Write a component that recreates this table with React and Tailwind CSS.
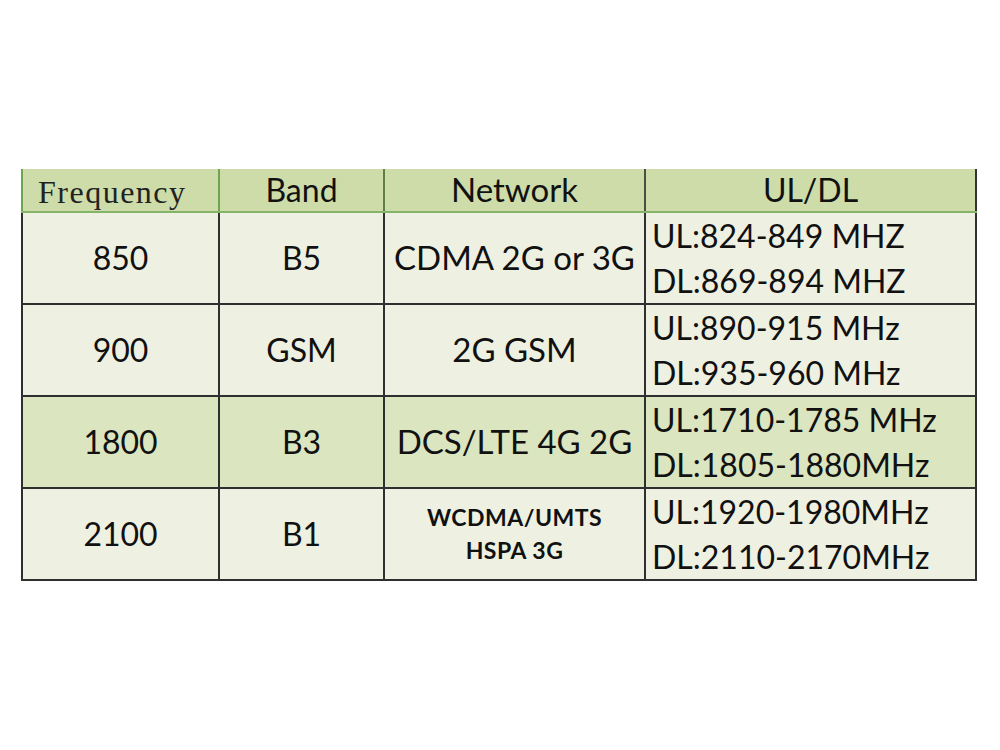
export default function App() {
  const rows = [
    { f: "850", b: "B5", n: "CDMA 2G or 3G", u: "UL:824-849 MHZ", d: "DL:869-894 MHZ", bg: "bg-[#eef0e1]" },
    { f: "900", b: "GSM", n: "2G GSM", u: "UL:890-915 MHz", d: "DL:935-960 MHz", bg: "bg-[#eef0e1]" },
    { f: "1800", b: "B3", n: "DCS/LTE 4G 2G", u: "UL:1710-1785 MHz", d: "DL:1805-1880MHz", bg: "bg-[#dbe5bf]" },
    { f: "2100", b: "B1", n: null, u: "UL:1920-1980MHz", d: "DL:2110-2170MHz", bg: "bg-[#eef0e1]" },
  ];
  const sans = { fontFamily: "Lato, 'Open Sans', sans-serif" };
  return (
    <div className="w-[1000px] h-[750px] bg-white pt-[169px] pl-[21px]" style={sans}>
      <div className="w-[956px] text-[#111]">
        <div className="flex h-[44px] bg-[#cddca8] border-b-2 border-[#84b468]">
          <div className="w-[199px] border-l-2 border-r-2 border-[#6fa452] flex items-center justify-start pl-[15px] pt-[3px] text-[32px] tracking-[1.5px] text-[#222]" style={{ fontFamily: "'Liberation Serif', 'DejaVu Serif', serif" }}>Frequency</div>
          <div className="w-[165px] border-r-2 border-[#5f7e4a] flex items-center justify-center text-[32px]">Band</div>
          <div className="w-[261px] border-r-2 border-[#4a4f44] flex items-center justify-center text-[33px]">Network</div>
          <div className="w-[331px] border-r-2 border-[#333] flex items-center justify-center text-[32px]">UL/DL</div>
        </div>
        {rows.map((r, i) => (
          <div key={i} className={`flex h-[92px] ${r.bg} border-l-2 border-b-2 border-[#2f2f2f]`}>
            <div className="w-[197px] border-r-2 border-[#2f2f2f] flex items-center justify-center text-[32px]">{r.f}</div>
            <div className="w-[165px] border-r-2 border-[#2f2f2f] flex items-center justify-center text-[32px]">{r.b}</div>
            <div className="w-[261px] border-r-2 border-[#2f2f2f] flex flex-col items-center justify-center">
              {r.n ? (
                <span className="text-[33px]">{r.n}</span>
              ) : (
                <>
                  <span className="text-[23px] font-bold leading-[33px] tracking-[0.5px]">WCDMA/UMTS</span>
                  <span className="text-[23px] font-bold leading-[33px] tracking-[0.5px]">HSPA 3G</span>
                </>
              )}
            </div>
            <div className="w-[331px] border-r-2 border-[#2f2f2f] flex flex-col justify-center pl-[6px] text-[32px] leading-[45px]">
              <span>{r.u}</span>
              <span>{r.d}</span>
            </div>
          </div>
        ))}
      </div>
    </div>
  );
}
